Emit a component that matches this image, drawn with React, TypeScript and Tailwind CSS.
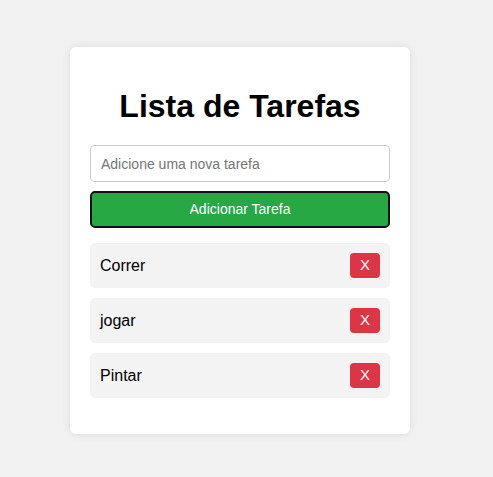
import React, { useState } from "react";

export default function App() {
  const [tasks, setTasks] = useState<string[]>(["Correr", "jogar", "Pintar"]);
  const [text, setText] = useState("");
  return (
    <div className="min-h-[477px] w-full bg-[#f2f2f2] pt-[47px] font-['Liberation_Sans',Arial,sans-serif]">
      <div className="ml-[70px] w-[340px] rounded-[6px] bg-white px-5 pt-5 pb-9 shadow-[0_0_10px_rgba(0,0,0,0.1)]">
        <h1 className="mt-[21px] mb-[20px] h-[37px] text-center text-[32px] leading-[37px] font-bold text-black">
          Lista de Tarefas
        </h1>
        <input
          value={text}
          onChange={(e) => setText(e.target.value)}
          placeholder="Adicione uma nova tarefa"
          className="box-border block h-[37px] w-full rounded-[4px] border border-[#ccc] px-[10px] text-[14px] text-black outline-none placeholder:text-[#757575]"
        />
        <button
          onClick={() => {
            if (text.trim()) {
              setTasks([...tasks, text.trim()]);
              setText("");
            }
          }}
          className="mt-[9px] box-border block h-[37px] w-full rounded-[5px] border-2 border-[#111] bg-[#28a745] text-[14px] text-white"
        >
          Adicionar Tarefa
        </button>
        <ul className="mt-[15px] flex flex-col gap-[10px]">
          {tasks.map((t, i) => (
            <li
              key={i}
              className="flex h-[45px] items-center justify-between rounded-[5px] bg-[#f3f3f3] px-[10px] text-[16px] text-black"
            >
              <span>{t}</span>
              <button
                onClick={() => setTasks(tasks.filter((_, j) => j !== i))}
                className="flex h-[25px] w-[30px] items-center justify-center rounded-[4px] bg-[#dc3545] text-[15px] text-white"
              >
                X
              </button>
            </li>
          ))}
        </ul>
      </div>
    </div>
  );
}
